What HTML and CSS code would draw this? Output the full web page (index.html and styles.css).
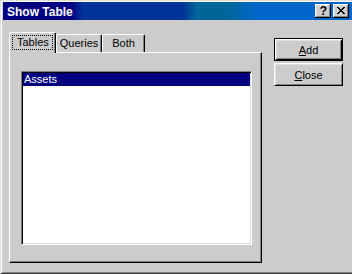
FILE: index.html
```html
<!DOCTYPE html>
<html lang="en">
<head>
  <meta charset="UTF-8" />
  <title>Show Table</title>
  <link rel="stylesheet" href="styles.css">
</head>
<body>
  <div class="window">
    <!-- title bar -->
    <div class="titlebar">
      <span class="title">Show Table</span>
      <div class="caption-btns">
        <span class="cap-btn help">?</span>
        <span class="cap-btn">
          <svg width="8" height="7" viewBox="0 0 8 7" shape-rendering="crispEdges">
            <path fill="#000" d="M0 0h2v1H0z M6 0h2v1H6z M1 1h2v1H1z M5 1h2v1H5z M2 2h4v1H2z M3 3h2v1H3z M2 4h4v1H2z M1 5h2v1H1z M5 5h2v1H5z M0 6h2v1H0z M6 6h2v1H6z"/>
          </svg>
        </span>
      </div>
    </div>

    <div class="dialog-body">
      <!-- tabs + list -->
      <div class="tab-area">
        <div class="tabs">
          <div class="tab active"><span class="focus">Tables</span></div>
          <div class="tab queries">Queries</div>
          <div class="tab both">Both</div>
        </div>
        <div class="panel">
          <div class="listbox">
            <div class="item selected">Assets</div>
          </div>
        </div>
      </div>

      <!-- buttons -->
      <div class="buttons">
        <button class="btn default"><u>A</u>dd</button>
        <button class="btn"><u>C</u>lose</button>
      </div>
    </div>
  </div>
</body>
</html>
```

FILE: styles.css
```css
body {
  margin: 0;
  padding: 0;
  background: #cccccc;
  font-family: "Liberation Sans", Arial, sans-serif;
  font-size: 11px;
  color: #000;
  overflow: hidden;
}

.window {
  width: 352px;
  height: 274px;
  box-sizing: border-box;
  background: #cccccc;
  border-top: 1px solid #dfdfdf;
  border-left: 1px solid #dfdfdf;
  border-bottom: 1px solid #404040;
  box-shadow: inset 1px 1px #fff, inset 0 -1px #808080;
  padding: 1px 0 0 2px;
  display: flex;
  flex-direction: column;
}

/* ======================
   title bar
   ====================== */
.titlebar {
  height: 18px;
  flex: 0 0 auto;
  display: flex;
  align-items: center;
  justify-content: space-between;
  padding: 0 3px 0 4px;
  background: linear-gradient(to right,
    #000080 0, #000080 68px,
    #003399 80px, #003399 180px,
    #006699 194px, #006699 226px,
    #0066cc 254px, #0066cc 100%);
}
.title {
  color: #fff;
  font-weight: bold;
  font-size: 12px;
  line-height: 14px;
  padding-top: 1px;
}
.caption-btns {
  display: flex;
  gap: 2px;
}
.cap-btn {
  width: 16px;
  height: 14px;
  box-sizing: border-box;
  background: #cccccc;
  box-shadow: inset -1px -1px #000, inset 1px 1px #fff, inset -2px -2px #808080, inset 2px 2px #dfdfdf;
  display: flex;
  align-items: center;
  justify-content: center;
}
.cap-btn.help {
  font-weight: bold;
  font-size: 12px;
  line-height: 14px;
  padding-left: 1px;
}
.cap-btn svg {
  display: block;
  margin-top: -1px;
}

/* ======================
   dialog body
   ====================== */
.dialog-body {
  flex: 1;
  display: flex;
  padding: 12px 0 9px 6px;
  gap: 12px;
}

.tab-area {
  width: 253px;
  display: flex;
  flex-direction: column;
}
.tabs {
  height: 20px;
  display: flex;
  align-items: flex-end;
}
.tab {
  height: 18px;
  box-sizing: border-box;
  border-top: 1px solid #fff;
  border-left: 1px solid #fff;
  border-right: 1px solid #000;
  border-radius: 2px 2px 0 0;
  box-shadow: inset -1px 0 #808080;
  padding-top: 2px;
  line-height: 13px;
  text-align: center;
  background: #cccccc;
}
.tab.active {
  width: 47px;
  height: 21px;
  margin-bottom: -1px;
  position: relative;
  z-index: 1;
  padding-top: 2px;
  padding-left: 2px;
  text-align: left;
}
.tab.queries {
  width: 46px;
}
.tab.both {
  width: 43px;
}
.focus {
  display: inline-block;
  border: 1px dotted #000;
  padding: 0 3px 0 4px;
  width: 41px;
  box-sizing: border-box;
}

.panel {
  height: 211px;
  box-sizing: border-box;
  border-top: 1px solid #fff;
  border-left: 1px solid #fff;
  border-right: 1px solid #000;
  border-bottom: 1px solid #000;
  box-shadow: inset -1px -1px #808080;
  padding: 18px 0 0 11px;
}
.listbox {
  width: 231px;
  height: 174px;
  box-sizing: border-box;
  background: #fff;
  border: 1px solid;
  border-color: #808080 #fff #fff #808080;
  box-shadow: inset 1px 1px #000, inset -1px -1px #dfdfdf;
  padding: 1px 1px 0 1px;
}
.item {
  height: 13px;
  line-height: 13px;
  padding-left: 1px;
}
.item.selected {
  background: #000080;
  color: #fff;
}

/* ======================
   buttons
   ====================== */
.buttons {
  display: flex;
  flex-direction: column;
  gap: 2px;
  margin-top: 6px;
}
.btn {
  width: 69px;
  height: 23px;
  box-sizing: border-box;
  background: #cccccc;
  font-family: "Liberation Sans", Arial, sans-serif;
  font-size: 11px;
  font-weight: normal;
  color: #000;
  padding: 0;
  border: 1px solid;
  border-color: #fff #000 #000 #fff;
  box-shadow: inset 1px 1px #dfdfdf, inset -1px -1px #808080;
}
.btn.default {
  border-color: #000;
  box-shadow: inset 1px 1px #fff, inset -1px -1px #000, inset 2px 2px #dfdfdf, inset -2px -2px #808080;
}
.btn u {
  text-decoration: underline;
}
```
